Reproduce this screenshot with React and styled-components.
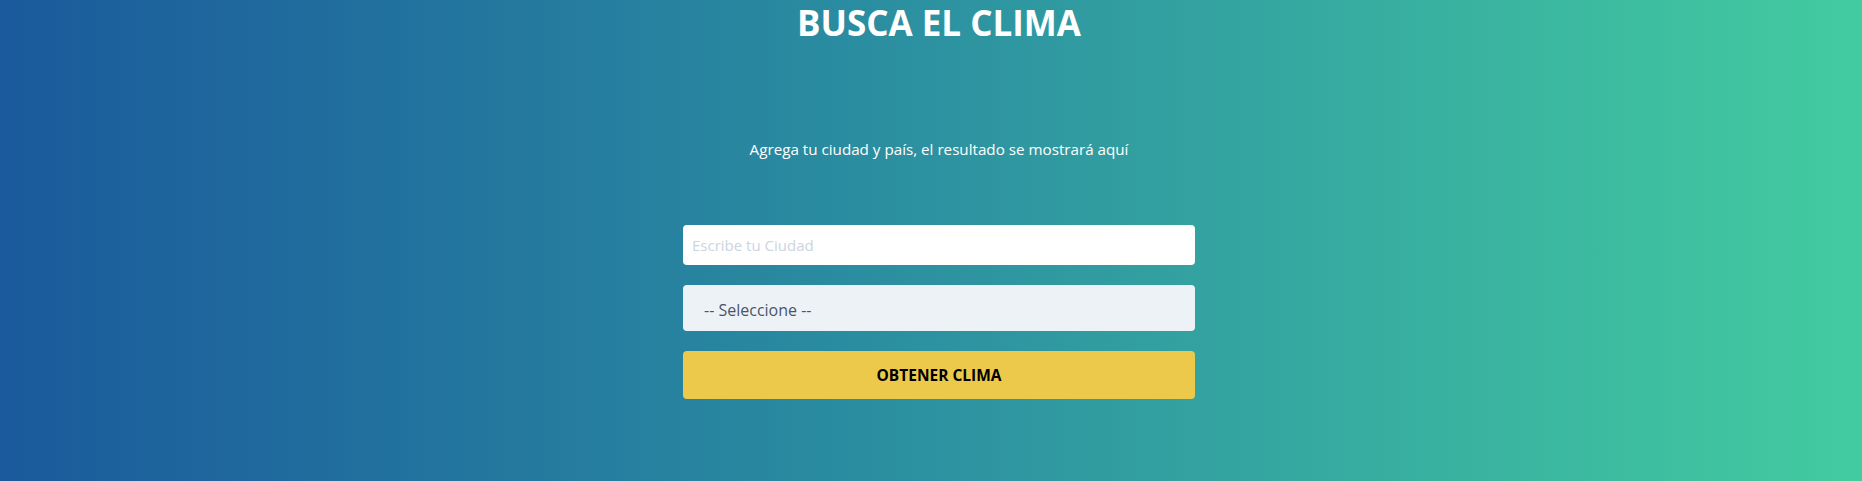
import React from "react";
import styled, { createGlobalStyle } from "styled-components";

const Global = createGlobalStyle`
  html, body { margin: 0; padding: 0; }
  body {
    font-family: "Open Sans", "Noto Sans", sans-serif;
    background: linear-gradient(to right, #1a5a9c 0%, #2a8ca0 45%, #43cba0 100%);
    min-height: 481px;
  }
`;

const Page = styled.div`
  min-height: 481px;
  display: flex;
  flex-direction: column;
  align-items: center;
  padding-left: 16px;
  box-sizing: border-box;
`;

const Title = styled.h1`
  margin: 0;
  padding-top: 1px;
  font-size: 35px;
  line-height: 44px;
  font-weight: 700;
  color: #ffffff;
`;

const Subtitle = styled.p`
  margin: 93px 0 0;
  font-size: 15.2px;
  line-height: 22px;
  color: #ffffff;
`;

const Form = styled.form`
  width: 512px;
  margin-top: 65px;
  display: flex;
  flex-direction: column;
  gap: 20px;
`;

const Input = styled.input`
  height: 40px;
  box-sizing: border-box;
  border: none;
  border-radius: 4px;
  background: #ffffff;
  padding: 0 9px;
  font-family: inherit;
  font-size: 15px;
  color: #4a5568;
  outline: none;
  &::placeholder { color: #cbd5e0; }
`;

const Select = styled.div`
  height: 46px;
  box-sizing: border-box;
  border-radius: 4px;
  background: #edf2f7;
  padding: 4px 21px 0;
  display: flex;
  align-items: center;
  font-size: 16px;
  color: #4a5568;
`;

const Button = styled.button`
  height: 48px;
  border: none;
  border-radius: 4px;
  background: #ecc94b;
  font-family: inherit;
  font-size: 15.5px;
  font-weight: 700;
  color: #000000;
  text-transform: uppercase;
  cursor: pointer;
`;

export default function App() {
  return (
    <>
      <Global />
      <Page>
        <Title>BUSCA EL CLIMA</Title>
        <Subtitle>Agrega tu ciudad y país, el resultado se mostrará aquí</Subtitle>
        <Form onSubmit={(e) => e.preventDefault()}>
          <Input type="text" placeholder="Escribe tu Ciudad" />
          <Select>-- Seleccione --</Select>
          <Button type="submit">Obtener Clima</Button>
        </Form>
      </Page>
    </>
  );
}
